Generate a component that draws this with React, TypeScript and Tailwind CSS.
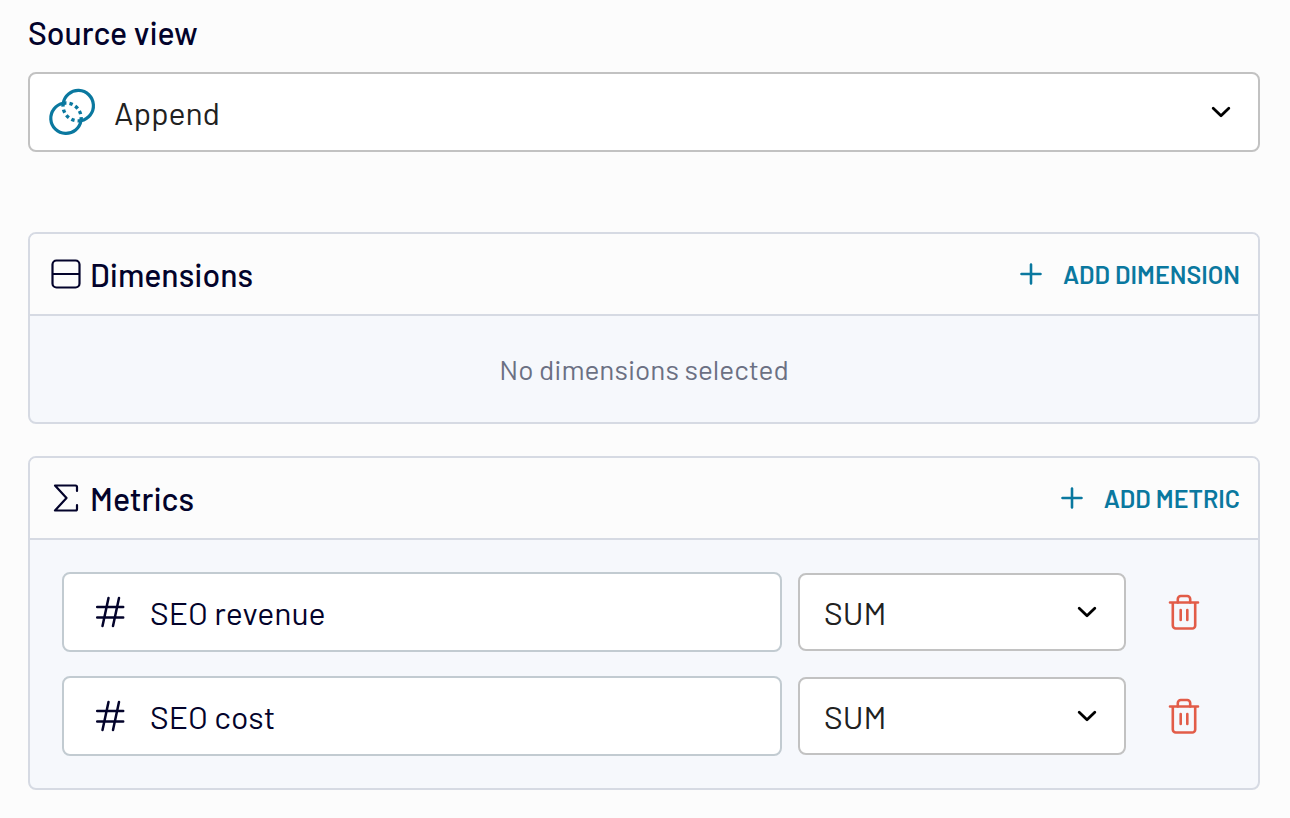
import { useState, type ReactNode } from "react";

type Metric = { id: string; name: string; aggregation: string };

const aggregations = ["SUM", "AVG", "MIN", "MAX", "COUNT"];

const initialMetrics: Metric[] = [
  { id: "seo-revenue", name: "SEO revenue", aggregation: "SUM" },
  { id: "seo-cost", name: "SEO cost", aggregation: "SUM" },
];

const AppendIcon = ({ className }: { className?: string }) => (
  <svg viewBox="0 0 48 48" fill="none" stroke="currentColor" strokeWidth="3.2" className={className} aria-hidden="true">
    <path d="M15.200 15.300A15.200 15.200 0 1 1 33 32.600" />
    <path d="M15.200 15.300A15.200 15.200 0 1 0 33 32.600" />
    <g strokeWidth="3.4" strokeDasharray="3.4 2.9">
      <path d="M15.200 15.300A15.200 15.200 0 0 0 33 32.600" />
      <path d="M15.200 15.300A15.200 15.200 0 0 1 33 32.600" />
    </g>
  </svg>
);

const ChevronIcon = ({ className }: { className?: string }) => (
  <svg viewBox="0 0 20 12" fill="none" stroke="currentColor" strokeWidth="2.8" strokeLinecap="round" strokeLinejoin="round" className={className} aria-hidden="true">
    <path d="M2.200 2.200l7.800 7.500 7.800-7.500" />
  </svg>
);

const DimensionIcon = () => (
  <svg viewBox="0 0 32 32" fill="none" stroke="currentColor" strokeWidth="2.2" className="size-8" aria-hidden="true">
    <rect x="2.500" y="2.500" width="27" height="27" rx="4" />
    <path d="M2.500 16h27" />
  </svg>
);

const SigmaIcon = () => (
  <svg viewBox="0 0 32 32" fill="none" stroke="currentColor" strokeWidth="2.2" strokeLinecap="round" strokeLinejoin="round" className="size-8" aria-hidden="true">
    <path d="M27 9V5a1.500 1.500 0 0 0-1.500-1.500H5L16.500 16 5 28.500h20.500A1.500 1.500 0 0 0 27 27v-4" />
  </svg>
);

const PlusIcon = () => (
  <svg viewBox="0 0 24 24" fill="none" stroke="currentColor" strokeWidth="2.6" strokeLinecap="round" className="size-6" aria-hidden="true">
    <path d="M12 2.500v19M2.500 12h19" />
  </svg>
);

const HashIcon = ({ className }: { className?: string }) => (
  <svg viewBox="0 0 32 32" fill="none" stroke="currentColor" strokeWidth="2.5" strokeLinecap="round" className={className} aria-hidden="true">
    <path d="M3.200 11h26M3.200 21.500h26M14.500 2L8.500 30M25 2l-6 28" />
  </svg>
);

const TrashIcon = () => (
  <svg viewBox="0 0 32 36" fill="none" stroke="currentColor" strokeWidth="2.6" strokeLinecap="round" strokeLinejoin="round" className="h-9 w-8" aria-hidden="true">
    <path d="M2 8.500h28M4.800 8.500V31.500a3 3 0 0 0 3 3h16.400a3 3 0 0 0 3-3V8.500" />
    <path d="M9.800 8.500V5a3 3 0 0 1 3-3h6.400a3 3 0 0 1 3 3v3.500" />
    <path d="M12.700 16v10M19.300 16v10" />
  </svg>
);

type PanelProps = {
  title: string;
  icon: ReactNode;
  action: string;
  children: ReactNode;
};

const Panel = ({ title, icon, action, children }: PanelProps) => (
  <section className="rounded-lg border-2 border-[#d6dae3] bg-[#f6f8fc] overflow-hidden">
    <div className="flex h-[82px] items-center justify-between border-b-2 border-[#d6dae3] bg-[#fcfcfc] pr-[18px] pl-5">
      <h2 className="flex items-center gap-2 text-[32px] leading-10 font-medium">
        {icon}
        {title}
      </h2>
      <button type="button" className="flex items-center gap-5 text-[25px] leading-8 font-semibold text-[#0a789f]">
        <PlusIcon />
        {action}
      </button>
    </div>
    {children}
  </section>
);

export default function App() {
  const [metrics, setMetrics] = useState(initialMetrics);

  const updateMetric = (id: string, patch: Partial<Metric>) =>
    setMetrics(metrics.map((metric) => (metric.id === id ? { ...metric, ...patch } : metric)));

  return (
    <main className="min-h-screen bg-[#fcfcfc] pt-3 pr-[30px] pb-7 pl-7 font-[Barlow,Roboto,sans-serif] text-[#03032b]">
      <label htmlFor="source-view" className="block text-[32px] leading-10 font-medium">
        Source view
      </label>
      <div className="relative mt-5">
        <AppendIcon className="pointer-events-none absolute top-4 left-5 size-12 text-[#0a789f]" />
        <select
          id="source-view"
          className="block h-20 w-full appearance-none rounded-lg border-2 border-[#c2c2c2] bg-white pl-[84px] text-[32px] text-[#212121]"
        >
          <option>Append</option>
        </select>
        <ChevronIcon className="pointer-events-none absolute top-[34px] right-[29px] h-3 w-5 text-black" />
      </div>

      <div className="mt-20 flex flex-col gap-8">
        <Panel title="Dimensions" icon={<DimensionIcon />} action="ADD DIMENSION">
          <p className="py-8 text-center text-[28px] leading-[42px] text-[#6b7083]">No dimensions selected</p>
        </Panel>

        <Panel title="Metrics" icon={<SigmaIcon />} action="ADD METRIC">
          <ul className="flex flex-col gap-6 p-8">
            {metrics.map((metric) => (
              <li key={metric.id} className="flex items-center gap-4">
                <div className="relative flex-1">
                  <HashIcon className="pointer-events-none absolute top-6 left-8 size-8" />
                  <input
                    type="text"
                    aria-label="Metric name"
                    value={metric.name}
                    onChange={(e) => updateMetric(metric.id, { name: e.target.value })}
                    className="block h-20 w-full rounded-lg border-2 border-[#c2cbd1] bg-white pr-6 pl-[86px] text-[32px]"
                  />
                </div>
                <div className="relative w-[328px]">
                  <select
                    aria-label={`Aggregation for ${metric.name}`}
                    value={metric.aggregation}
                    onChange={(e) => updateMetric(metric.id, { aggregation: e.target.value })}
                    className="block h-[78px] w-full appearance-none rounded-lg border-2 border-[#c2c2c2] bg-white pl-6 text-[32px] text-[#212121]"
                  >
                    {aggregations.map((name) => (
                      <option key={name}>{name}</option>
                    ))}
                  </select>
                  <ChevronIcon className="pointer-events-none absolute top-[33px] right-[29px] h-3 w-5 text-black" />
                </div>
                <button
                  type="button"
                  aria-label={`Remove ${metric.name}`}
                  onClick={() => setMetrics(metrics.filter((m) => m.id !== metric.id))}
                  className="flex h-20 w-[84px] items-center justify-center text-[#e25c48]"
                >
                  <TrashIcon />
                </button>
              </li>
            ))}
          </ul>
        </Panel>
      </div>
    </main>
  );
}
